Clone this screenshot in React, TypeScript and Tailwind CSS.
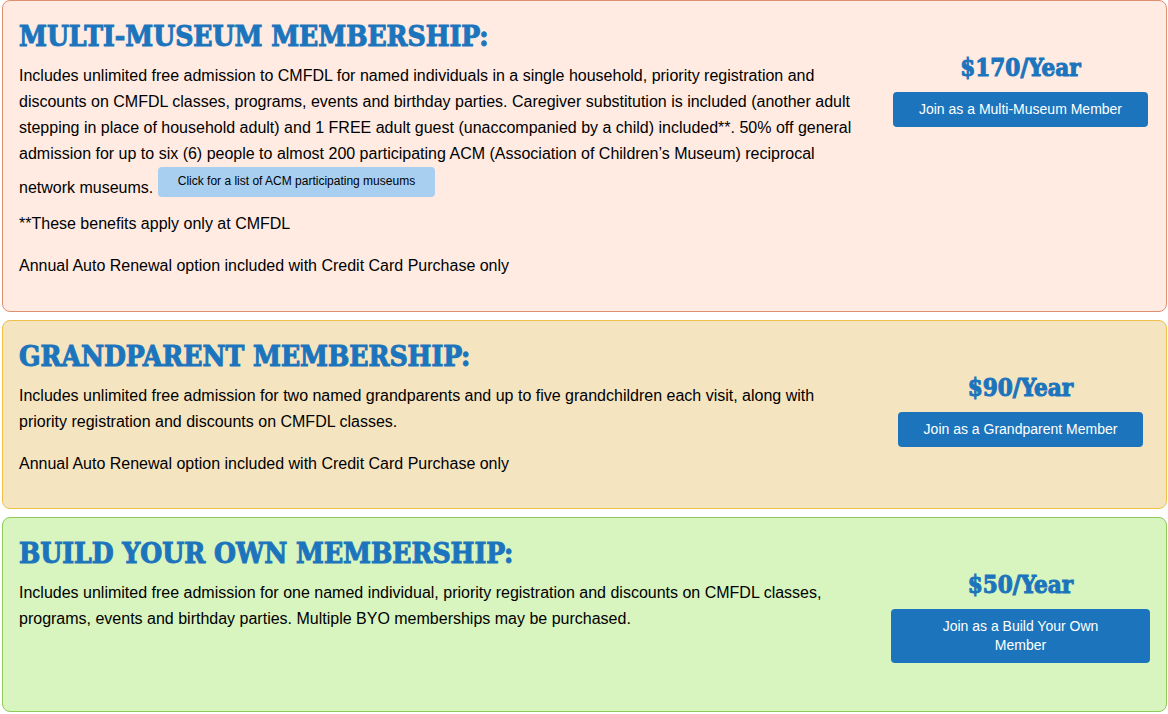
import type { ReactNode } from "react";

type Plan = {
  title: string;
  price: string;
  action: string;
  card: string;
  body: ReactNode;
};

const plans: Plan[] = [
  {
    title: "MULTI-MUSEUM MEMBERSHIP:",
    price: "$170/Year",
    action: "Join as a Multi-Museum Member",
    card: "min-h-[312px] border-[#e0906f] bg-[#ffebe2]",
    body: (
      <>
        <p>
          Includes unlimited free admission to CMFDL for named individuals in a single household, priority registration and
          <br />
          discounts on CMFDL classes, programs, events and birthday parties. Caregiver substitution is included (another adult
          <br />
          stepping in place of household adult) and 1 FREE adult guest (unaccompanied by a child) included**. 50% off general
          <br />
          admission for up to six (6) people to almost 200 participating ACM (Association of Children’s Museum) reciprocal
          <br />
          network museums.{" "}
          <a
            href="#museums"
            className="mb-[14px] inline-block rounded-sm bg-[#a8cff0] px-5 pt-px pb-[3px] align-middle text-xs leading-[26px]"
          >
            Click for a list of ACM participating museums
          </a>
        </p>
        <p>**These benefits apply only at CMFDL</p>
        <p className="mt-4">Annual Auto Renewal option included with Credit Card Purchase only</p>
      </>
    ),
  },
  {
    title: "GRANDPARENT MEMBERSHIP:",
    price: "$90/Year",
    action: "Join as a Grandparent Member",
    card: "min-h-[189px] border-[#efc04a] bg-[#f5e4c0]",
    body: (
      <>
        <p>
          Includes unlimited free admission for two named grandparents and up to five grandchildren each visit, along with
          <br />
          priority registration and discounts on CMFDL classes.
        </p>
        <p className="mt-4">Annual Auto Renewal option included with Credit Card Purchase only</p>
      </>
    ),
  },
  {
    title: "BUILD YOUR OWN MEMBERSHIP:",
    price: "$50/Year",
    action: "Join as a Build Your Own Member",
    card: "min-h-[195px] border-[#8fc95a] bg-[#d8f4bf]",
    body: (
      <p>
        Includes unlimited free admission for one named individual, priority registration and discounts on CMFDL classes,
        <br />
        programs, events and birthday parties. Multiple BYO memberships may be purchased.
      </p>
    ),
  },
];

export default function App() {
  return (
    <main className="flex flex-col gap-2 bg-white pr-px pl-0.5 font-['Liberation_Sans',Arial,sans-serif] text-black">
      {plans.map((plan) => (
        <section key={plan.title} className={`flex items-start rounded-lg border ${plan.card}`}>
          <div className="min-w-0 flex-1 pt-[18px] pl-4 text-base leading-[26px]">
            <h2 className="mb-2 font-['DejaVu_Serif_Condensed','DejaVu_Serif',serif] text-[28px] leading-9 font-bold text-[#1c75bc] [-webkit-text-stroke:1px_#1c75bc]">
              {plan.title}
            </h2>
            {plan.body}
          </div>
          <div className="flex w-[291px] shrink-0 flex-col items-center px-4 pt-[49px]">
            <h3 className="font-['DejaVu_Serif_Condensed','DejaVu_Serif',serif] text-2xl leading-9 font-bold text-[#1c75bc] [-webkit-text-stroke:1px_#1c75bc]">
              {plan.price}
            </h3>
            <a
              href="#join"
              className="mt-1.5 rounded bg-[#1c75bc] px-[26px] py-2 text-center text-sm leading-[19px] text-white"
            >
              {plan.action}
            </a>
          </div>
        </section>
      ))}
    </main>
  );
}
